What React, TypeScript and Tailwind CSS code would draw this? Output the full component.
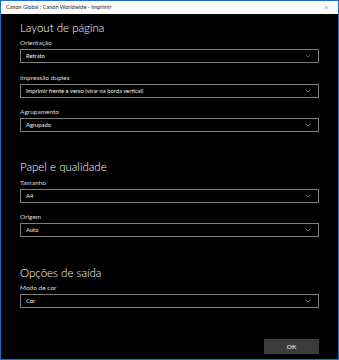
import { ChevronDown, X } from "lucide-react";

type SelectProps = {
  label: string;
  value: string;
  className?: string;
};

function Select({ label, value, className }: SelectProps) {
  return (
    <div className={className}>
      <div className="h-[9px] text-[6.5px] leading-[9px] text-[#dcdcdc]">{label}</div>
      <div className="mt-[2px] flex h-[14px] w-[299px] items-center justify-between border border-[#7d7d7d] bg-black pl-[5px] pr-[6px]">
        <span className="text-[5.8px] leading-[12px] text-[#f2f2f2]">{value}</span>
        <ChevronDown className="h-[8px] w-[8px] text-[#bdbdbd]" strokeWidth={1.5} />
      </div>
    </div>
  );
}

function Heading({ children, className }: { children: string; className?: string }) {
  return (
    <h2 className={`h-[16px] text-[11.5px] font-light leading-[16px] text-white ${className ?? ""}`}>
      {children}
    </h2>
  );
}

export default function App() {
  return (
    <div
      className="flex h-[360px] w-[339px] flex-col border border-[#1f6fc5] bg-black"
      style={{ fontFamily: 'Lato, "Noto Sans", sans-serif' }}
    >
      {/* Title bar */}
      <div className="flex h-[13px] shrink-0 items-center justify-between bg-white pl-[5px] pr-[8px]">
        <span className="text-[5.5px] leading-[13px] text-[#222]">
          Canon Global : Canon Worldwide - Imprimir
        </span>
        <X className="h-[7px] w-[7px] text-[#555]" strokeWidth={1.5} />
      </div>

      <div className="flex flex-1 flex-col pl-[19px]">
        <Heading className="mt-[6px]">Layout de página</Heading>
        <Select className="mt-[2px]" label="Orientação" value="Retrato" />
        <Select className="mt-[10px]" label="Impressão duplex" value="Imprimir frente e verso (virar na borda vertical)" />
        <Select className="mt-[9px]" label="Agrupamento" value="Agrupado" />

        <Heading className="mt-[27px]">Papel e qualidade</Heading>
        <Select className="mt-[3px]" label="Tamanho" value="A4" />
        <Select className="mt-[9px]" label="Origem" value="Auto" />

        <Heading className="mt-[28px]">Opções de saída</Heading>
        <Select className="mt-[2px]" label="Modo de cor" value="Cor" />

        <div className="mt-[31px] flex w-[299px] justify-end">
          <button
            type="button"
            className="h-[15px] w-[55px] bg-[#3b3b3b] text-[6.5px] leading-[15px] text-white"
          >
            OK
          </button>
        </div>
      </div>
    </div>
  );
}
